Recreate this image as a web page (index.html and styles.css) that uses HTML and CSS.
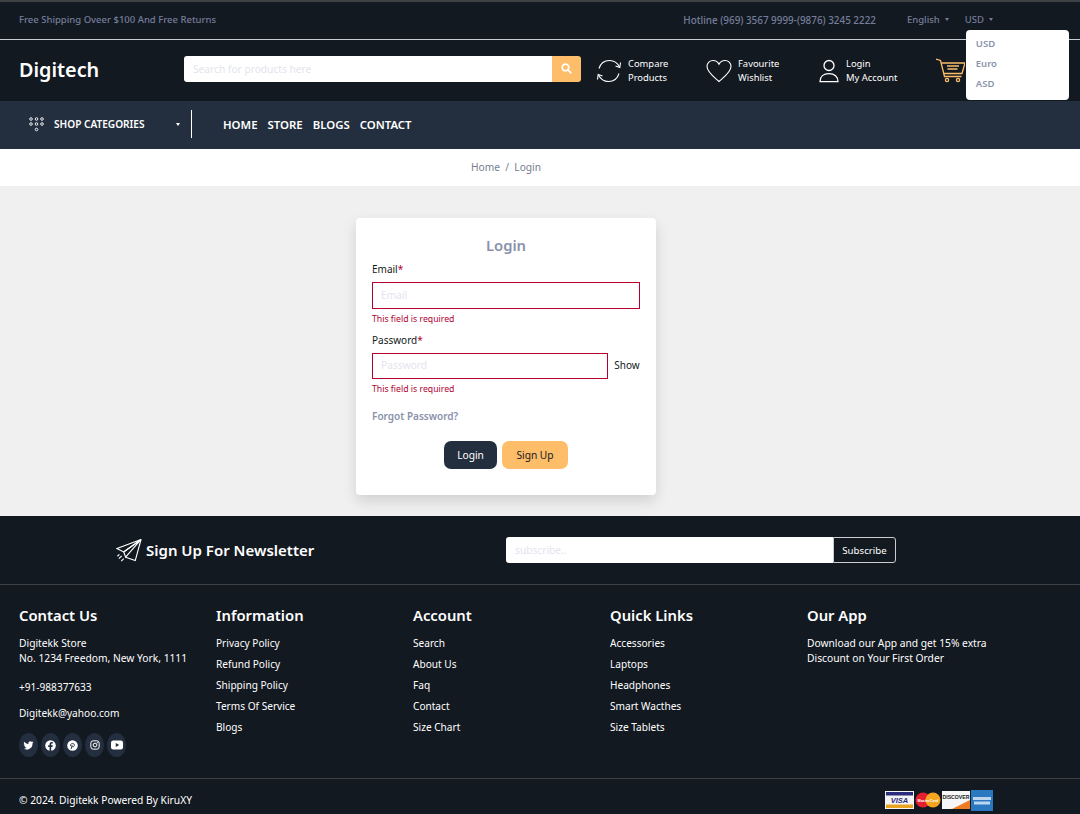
FILE: index.html
```html
<!DOCTYPE html>
<html lang="en">
<head>
  <meta charset="UTF-8">
  <meta name="viewport" content="width=device-width, initial-scale=1.0">
  <title>Login - Digitech</title>
  <link rel="stylesheet" href="styles.css">
</head>
<body>
  <!-- top strip -->
  <div class="topbar">
    <p class="topbar-note">Free Shipping Oveer $100 And Free Returns</p>
    <p class="hotline">Hotline (969) 3567 9999-(9876) 3245 2222</p>
    <span class="drop drop-lang">English<i class="caret"></i></span>
    <div class="currency">
      <span class="drop">USD<i class="caret"></i></span>
      <ul class="currency-menu">
        <li>USD</li>
        <li>Euro</li>
        <li>ASD</li>
      </ul>
    </div>
  </div>

  <header class="header">
    <a class="logo">Digitech</a>
    <div class="search">
      <input type="text" placeholder="Search for products here">
      <button aria-label="Search">
        <svg width="11" height="11" viewBox="0 0 16 16" fill="none" stroke="#fff" stroke-width="2.4"><circle cx="6.5" cy="6.5" r="4.8"/><path d="M10 10l5 5"/></svg>
      </button>
    </div>
    <a class="head-link link-compare">
      <svg width="26" height="26" viewBox="0 0 26 26" fill="none" stroke="#fff" stroke-width="1.1"><path d="M3 10.5C4.5 5.5 8.5 2.5 13.5 2.5c4.5 0 8 2.500 10 6.500"/><path d="M24.5 4.500L23.800 9.500 19.500 8"/><path d="M23 15.500c-1.500 5-5.500 8-10.500 8-4.500 0-8-2.500-10-6.500"/><path d="M1.500 21.500l.7-5L6.500 18"/></svg>
      <span>Compare<br>Products</span>
    </a>
    <a class="head-link link-fav">
      <svg width="26" height="24" viewBox="0 0 26 24" fill="none" stroke="#fff" stroke-width="1.1"><path d="M13 22.500C8 18 1 13 1 7.500 1 3.800 3.800 1.500 7 1.500c2.600 0 4.800 1.400 6 3.800 1.200-2.400 3.400-3.800 6-3.800 3.200 0 6 2.300 6 6 0 5.500-7 10.500-12 15z"/></svg>
      <span>Favourite<br>Wishlist</span>
    </a>
    <a class="head-link link-login">
      <svg width="20" height="24" viewBox="0 0 20 24" fill="none" stroke="#fff" stroke-width="1.3"><circle cx="10" cy="6.500" r="5"/><path d="M1 22.700c0-5 3.500-8 9-8s9 3 9 8z"/></svg>
      <span>Login<br>My Account</span>
    </a>
    <a class="cart">
      <svg width="29" height="25" viewBox="0 0 29 25" fill="none" stroke="#febd69" stroke-width="1.3"><path d="M0 1l4.500 1.500 4 16h17"/><path d="M5.500 5H29l-3 10.500H8"/><path d="M11 8h12M11.500 11h10"/><circle cx="11" cy="22" r="1.600"/><circle cx="22" cy="22" r="1.600"/></svg>
    </a>
  </header>

  <nav class="navbar">
    <div class="categories">
      <svg class="dots" width="15" height="15" viewBox="0 0 15 15" fill="none" stroke="#fff" stroke-width=".9"><circle cx="2" cy="2" r="1.300"/><circle cx="7.500" cy="2" r="1.300"/><circle cx="13" cy="2" r="1.300"/><circle cx="2" cy="7" r="1.300"/><circle cx="7.500" cy="7" r="1.300"/><circle cx="13" cy="7" r="1.300"/><circle cx="7.500" cy="12.500" r="1.300"/></svg>
      <span>SHOP CATEGORIES</span>
      <i class="caret caret-white"></i>
    </div>
    <div class="menu">
      <a>HOME</a>
      <a>STORE</a>
      <a>BLOGS</a>
      <a>CONTACT</a>
    </div>
  </nav>

  <div class="crumbs">Home &nbsp;/&nbsp; Login</div>

  <main class="login-wrap">
    <form class="login-card">
      <h3>Login</h3>
      <label>Email<span class="star">*</span></label>
      <input class="field" type="email" placeholder="Email">
      <div class="error">This field is required</div>
      <label class="label-pass">Password<span class="star">*</span></label>
      <div class="pass-row">
        <input class="field" type="password" placeholder="Password">
        <span class="show">Show</span>
      </div>
      <div class="error">This field is required</div>
      <a class="forgot">Forgot Password?</a>
      <div class="actions">
        <button class="btn btn-dark" type="button">Login</button>
        <button class="btn btn-orange" type="button">Sign Up</button>
      </div>
    </form>
  </main>

  <section class="newsletter">
    <div class="news-title">
      <svg width="26" height="25" viewBox="0 0 27 25" fill="none" stroke="#fff" stroke-width="1.2"><path d="M26 1L1 10.500l7 3.500z"/><path d="M26 1L8 14l2 5.500z"/><path d="M26 1l-6 22-10-3.500"/><path d="M6 18l-3 3M8 21l-2.500 2.500M3.500 16.500l-2 2"/></svg>
      <h4>Sign Up For Newsletter</h4>
    </div>
    <div class="subscribe">
      <input type="text" placeholder="subscribe..">
      <button type="button">Subscribe</button>
    </div>
  </section>

  <footer class="footer">
    <div class="foot-col">
      <h5>Contact Us</h5>
      <p class="address">Digitekk Store<br>No. 1234 Freedom, New York, 1111</p>
      <p class="phone">+91-988377633</p>
      <p class="mail">Digitekk@yahoo.com</p>
      <div class="socials">
        <a><svg width="11" height="11" viewBox="0 0 24 24" fill="#fff"><path d="M23 5.100c-.8.400-1.700.600-2.600.7.900-.6 1.600-1.400 2-2.500-.9.500-1.900.9-2.900 1.100A4.500 4.500 0 0 0 11.800 8.600C8 8.400 4.600 6.600 2.400 3.800c-1.200 2.100-.6 4.700 1.400 6-.7 0-1.400-.2-2-.6 0 2.200 1.500 4.100 3.600 4.500-.7.200-1.400.2-2 .1.600 1.800 2.300 3.100 4.200 3.100A9 9 0 0 1 1 18.800 12.800 12.800 0 0 0 20.700 7.400c.9-.6 1.700-1.400 2.300-2.300z"/></svg></a>
        <a><svg width="11" height="11" viewBox="0 0 24 24"><circle cx="12" cy="12" r="11.500" fill="#fff"/><path d="M10 24v-9H7v-3.500h3V9c0-3 1.800-4.600 4.500-4.600 1.300 0 2.500.2 2.500.2v3h-1.500c-1.500 0-2 .9-2 1.900v2h3.400l-.6 3.500h-2.800v9z" fill="#232f3e"/></svg></a>
        <a><svg width="11" height="11" viewBox="0 0 24 24"><circle cx="12" cy="12" r="11.500" fill="#fff"/><path d="M9 20l2.300-9.500M8.300 13.500c-1.500-2.500 0-6 3.700-6 3 0 4.500 2 4 4.500-.5 2.500-3.500 4-5 2" fill="none" stroke="#232f3e" stroke-width="2"/></svg></a>
        <a><svg width="10" height="10" viewBox="0 0 24 24" fill="none" stroke="#fff" stroke-width="2.4"><rect x="2" y="2" width="20" height="20" rx="5.500"/><circle cx="12" cy="12" r="4.500"/><circle cx="17.500" cy="6.500" r=".6"/></svg></a>
        <a><svg width="12" height="10" viewBox="0 0 24 18"><rect width="24" height="18" rx="4.500" fill="#fff"/><path d="M9.500 5l7 4-7 4z" fill="#232f3e"/></svg></a>
      </div>
    </div>
    <div class="foot-col">
      <h5>Information</h5>
      <a>Privacy Policy</a>
      <a>Refund Policy</a>
      <a>Shipping Policy</a>
      <a>Terms Of Service</a>
      <a>Blogs</a>
    </div>
    <div class="foot-col">
      <h5>Account</h5>
      <a>Search</a>
      <a>About Us</a>
      <a>Faq</a>
      <a>Contact</a>
      <a>Size Chart</a>
    </div>
    <div class="foot-col">
      <h5>Quick Links</h5>
      <a>Accessories</a>
      <a>Laptops</a>
      <a>Headphones</a>
      <a>Smart Wacthes</a>
      <a>Size Tablets</a>
    </div>
    <div class="foot-col">
      <h5>Our App</h5>
      <p class="app-text">Download our App and get 15% extra<br>Discount on Your First Order</p>
    </div>
  </footer>

  <div class="copyright">
    <p>&copy; 2024. Digitekk Powered By KiruXY</p>
    <div class="cards">
      <svg width="29" height="18" viewBox="0 0 29 18"><rect width="29" height="18" fill="#f4f4f4"/><rect x="1" y="1" width="27" height="3.500" fill="#2a2c7c"/><rect x="1" y="13.500" width="27" height="3.500" fill="#e8a323"/><text x="14.500" y="12" font-size="7.500" font-weight="700" font-style="italic" fill="#2a2c7c" text-anchor="middle" font-family="Liberation Sans">VISA</text></svg>
      <svg width="26" height="16" viewBox="0 0 26 16"><circle cx="8" cy="8" r="7.500" fill="#e5202e"/><circle cx="18" cy="8" r="7.500" fill="#f7a520"/><text x="13" y="9.500" font-size="3.800" font-weight="700" fill="#fff" text-anchor="middle" font-family="Liberation Sans">MasterCard</text></svg>
      <svg width="28" height="18" viewBox="0 0 28 18"><rect width="28" height="18" fill="#f7f7f7"/><path d="M10 18L28 9v9z" fill="#ef7c22"/><text x="14" y="8" font-size="5.200" font-weight="700" fill="#222" text-anchor="middle" font-family="Liberation Sans">DISCOVER</text></svg>
      <svg width="22" height="21" viewBox="0 0 22 21"><rect width="22" height="21" fill="#2a78c0"/><rect x="2" y="7" width="18" height="3" fill="#bcd6ee"/><rect x="3" y="11.500" width="16" height="3" fill="#bcd6ee"/></svg>
    </div>
  </div>
</body>
</html>
```

FILE: styles.css
```css
* {
  box-sizing: border-box;
}

body {
  margin: 0;
  font-family: "Noto Sans", "Open Sans", sans-serif;
  font-size: 10.2px;
  color: #fff;
  background: #131921;
}

p {
  margin: 0;
}

/* top strip */
.topbar {
  height: 40px;
  display: flex;
  align-items: center;
  padding: 0 19px 2px;
  border-top: 2px solid #3d4143;
  border-bottom: 1px solid #c9ccd0;
  color: #757d9a;
  font-size: 9.5px;
  font-weight: 500;
}

.hotline {
  margin-left: auto;
  font-size: 9.9px;
}

.drop-lang {
  margin-left: 31px;
}

.caret {
  display: inline-block;
  margin-left: 5px;
  vertical-align: 2px;
  border-top: 3px solid currentColor;
  border-left: 2.5px solid transparent;
  border-right: 2.5px solid transparent;
}

.currency {
  position: relative;
  margin-left: 16px;
  margin-right: 68px;
}

.currency-menu {
  position: absolute;
  z-index: 10;
  top: 17px;
  left: 1px;
  width: 103px;
  height: 70px;
  margin: 0;
  padding: 4px 10px;
  list-style: none;
  background: #fff;
  border-radius: 4px;
  font-weight: 600;
  font-size: 9.5px;
  color: #8b93ad;
}

.currency-menu li {
  height: 20px;
  line-height: 20px;
}

/* main header */
.header {
  height: 61px;
  display: flex;
  align-items: center;
  padding: 0 0 3px 19px;
}

.logo {
  width: 165px;
  font-size: 19.8px;
  font-weight: 600;
}

.search {
  width: 397px;
  height: 26px;
  display: flex;
}

.search input {
  flex: 1;
  min-width: 0;
  border: 0;
  padding: 0 9px;
  border-radius: 3px 0 0 3px;
  font: 10.2px "Noto Sans", sans-serif;
}

input::placeholder {
  color: #e3e4ee;
}

.search button {
  width: 29px;
  border: 0;
  padding: 0;
  background: #febd69;
  border-radius: 0 3px 3px 0;
}

.head-link {
  display: flex;
  align-items: center;
  gap: 6px;
  margin-top: 3px;
  font-size: 9.4px;
  line-height: 14px;
}

.link-compare {
  margin-left: 15px;
  width: 110px;
}

.link-fav {
  width: 113px;
}

.link-login {
  width: 117px;
  gap: 7px;
}

.cart {
  display: flex;
  margin-top: 3px;
}

/* nav bar */
.navbar {
  height: 48px;
  display: flex;
  align-items: center;
  padding-bottom: 2px;
  background: #232f3e;
}

.categories {
  width: 192px;
  height: 28px;
  display: flex;
  align-items: center;
  padding-left: 29px;
  border-right: 1px solid #fff;
  font-size: 10.1px;
  font-weight: 600;
}

.dots {
  margin-right: 10px;
}

.caret-white {
  margin-left: 31px;
  vertical-align: 0;
}

.menu {
  display: flex;
  gap: 10px;
  margin-left: 31px;
  font-size: 11.4px;
  font-weight: 600;
}

/* breadcrumb */
.crumbs {
  height: 37px;
  line-height: 37px;
  padding-right: 68px;
  background: #fff;
  color: #777e90;
  font-size: 10.2px;
  text-align: center;
}

/* login card */
.login-wrap {
  height: 330px;
  padding-top: 32px;
  padding-left: 356px;
  background: #f0f0f0;
}

.login-card {
  width: 300px;
  height: 277px;
  padding: 16px;
  background: #fff;
  border-radius: 4px;
  box-shadow: 0 6px 14px rgba(0, 0, 0, .13);
  color: #131921;
  font-size: 10px;
}

.login-card h3 {
  margin: 0 0 6px;
  color: #8a91ab;
  font-size: 14.8px;
  font-weight: 600;
  line-height: 22px;
  text-align: center;
}

.login-card label {
  display: block;
  height: 15px;
  line-height: 15px;
}

.star {
  color: #b00030;
}

.field {
  display: block;
  width: 100%;
  height: 27px;
  margin-top: 5px;
  padding: 0 8px 2px;
  border: 1px solid #b8002f;
  font: 10.2px "Noto Sans", sans-serif;
}

.error {
  margin-top: 3px;
  height: 14px;
  color: #b00030;
  font-size: 8.7px;
  line-height: 14px;
}

.label-pass {
  margin-top: 7px;
}

.pass-row {
  display: flex;
  align-items: center;
  gap: 5px;
}

.pass-row .field {
  width: 238px;
  height: 26px;
}

.show {
  margin-top: 3px;
  margin-left: 1px;
  width: 26px;
  white-space: nowrap;
}

.forgot {
  display: block;
  margin-top: 13px;
  color: #8a91ab;
  font-weight: 600;
  line-height: 15px;
}

.actions {
  display: flex;
  justify-content: center;
  gap: 5px;
  margin-top: 17px;
}

.btn {
  height: 28px;
  border: 0;
  border-radius: 7px;
  font: 10.2px "Noto Sans", sans-serif;
}

.btn-dark {
  width: 53px;
  background: #232f3e;
  color: #fff;
}

.btn-orange {
  width: 66px;
  background: #febd69;
  color: #131921;
}

/* newsletter */
.newsletter {
  height: 69px;
  display: flex;
  align-items: center;
  padding-left: 116px;
  border-bottom: 1px solid #3d4247;
}

.news-title {
  width: 390px;
  display: flex;
  align-items: center;
  gap: 4px;
}

.news-title h4 {
  margin: 0;
  font-size: 15px;
  font-weight: 600;
}

.subscribe {
  width: 390px;
  height: 26px;
  display: flex;
}

.subscribe input {
  flex: 1;
  min-width: 0;
  padding: 0 9px;
  border: 0;
  border-radius: 3px 0 0 3px;
  font: 10.2px "Noto Sans", sans-serif;
}

.subscribe button {
  width: 63px;
  padding: 0;
  border: 1px solid #c9ccd0;
  border-radius: 0 3px 3px 0;
  background: #131921;
  color: #fff;
  font: 9.7px "Noto Sans", sans-serif;
}

/* footer links */
.footer {
  height: 194px;
  display: grid;
  grid-template-columns: repeat(4, 197px) 1fr;
  padding: 19px 0 0 19px;
  border-bottom: 1px solid #3d4247;
  font-size: 10.1px;
}

.foot-col h5 {
  margin: 0 0 10px;
  font-size: 14.8px;
  font-weight: 600;
  line-height: 22px;
}

.foot-col a {
  display: block;
  height: 21px;
  line-height: 15px;
}

.address,
.app-text {
  font-size: 10.25px;
  line-height: 15px;
}

.phone {
  margin-top: 14px;
  line-height: 15px;
}

.mail {
  margin-top: 11px;
  line-height: 15px;
}

.socials {
  display: flex;
  gap: 3px;
  margin-top: 12px;
}

.socials a {
  width: 19px;
  height: 24px;
  display: flex;
  align-items: center;
  justify-content: center;
  border-radius: 50%;
  background: #232f3e;
}

/* bottom strip */
.copyright {
  height: 35px;
  display: flex;
  align-items: center;
  padding: 7px 87px 0 19px;
  font-size: 10.25px;
}

.cards {
  display: flex;
  align-items: center;
  gap: 1px;
  margin-left: auto;
}
```
